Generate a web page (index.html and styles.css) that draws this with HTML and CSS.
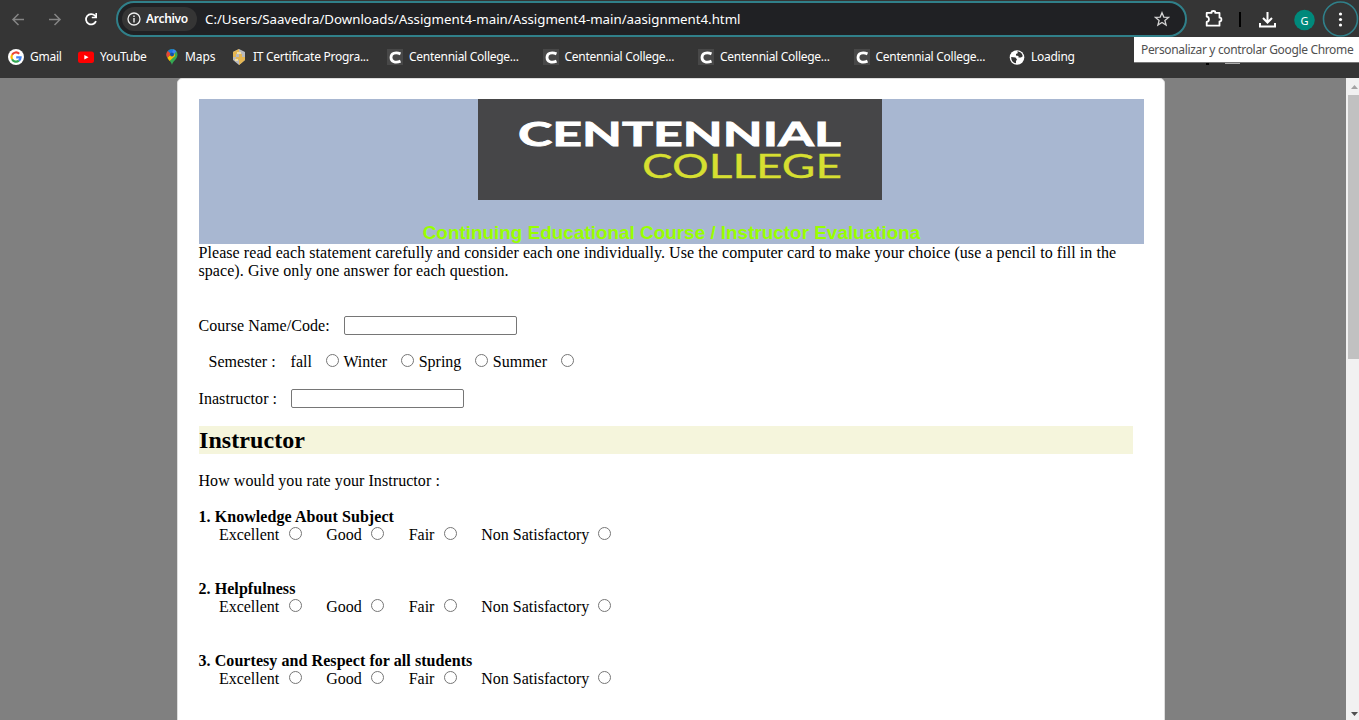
FILE: index.html
```html
<!DOCTYPE html>
<html lang="es">
<head>
<meta charset="utf-8">
<title>Course Evaluation</title>
<link rel="stylesheet" href="styles.css">
</head>
<body>
<header class="browser">
  <div class="toolbar">
    <svg class="nav-icons" width="116" height="38" viewBox="0 0 116 38" fill="none" stroke-width="1.5">
      <path stroke="#858585" d="M24 19.5H13M18.5 14l-5.5 5.5 5.5 5.5"/>
      <path stroke="#858585" d="M49 19.5h11M54.500 14l5.500 5.500-5.500 5.500"/>
      <path stroke="#fff" stroke-width="1.8" d="M96 21.200a5.200 5.200 0 1 1-1-5.500l1.300 1.400"/>
      <path fill="#fff" d="M97 13v5.200h-5.200v-1.500h3.600V13z"/>
    </svg>
    <div class="omnibox">
      <div class="chip">
        <svg width="14" height="14" viewBox="0 0 14 14"><circle cx="7" cy="7" r="6" fill="none" stroke="#eee" stroke-width="1.300"/><path fill="#eee" d="M6.300 6h1.400v4.500H6.300zM6.300 3.500h1.400v1.400H6.300z"/></svg>
        <span class="chip-label">Archivo</span>
      </div>
      <span class="url">C:/Users/Saavedra/Downloads/Assigment4-main/Assigment4-main/aasignment4.html</span>
      <svg class="star" width="16" height="16" viewBox="0 0 16 16" fill="none" stroke="#d4d4d4" stroke-width="1.300"><path d="M8 1.700l1.800 4.400 4.700.3-3.600 3 1.200 4.600L8 11.500 3.900 14l1.200-4.600-3.600-3 4.700-.3z"/></svg>
    </div>
    <svg class="tools" width="172" height="38" viewBox="0 0 172 38" fill="none">
      <path stroke="#fff" stroke-width="1.800" stroke-linejoin="round" d="M19.700 12.900h4.800v-.5a1.900 1.400 0 0 1 3.800 0v.5h4.200v4.800h.5a1.400 1.800 0 0 1 0 3.600h-.5v4.400H19.700v-3.700c3-.4 3-4.900 0-5.300z"/>
      <path stroke="#000" stroke-width="2" d="M53 12v15"/>
      <path stroke="#fff" stroke-width="2" d="M80.500 12v10M76 18l4.500 4.500L85 18M73 23v3.600h15V23"/>
      <circle cx="117.500" cy="20" r="10.300" fill="#00897b"/>
      <text class="avatar" x="117.500" y="24.500" text-anchor="middle">G</text>
      <circle cx="153.500" cy="19" r="17" stroke="#30808a" stroke-width="1.600"/>
      <g fill="#fff"><circle cx="153.500" cy="14" r="1.600"/><circle cx="153.500" cy="19.500" r="1.600"/><circle cx="153.500" cy="25" r="1.600"/></g>
    </svg>
  </div>
  <nav class="bookmarks">
    <a class="bm gmail"><svg width="16" height="16" viewBox="0 0 16 16" fill="none" stroke-width="2.200"><circle cx="8" cy="8" r="8" fill="#fff"/><path stroke="#ea4335" d="M4.100 5.800a4.500 4.500 0 0 1 7.100-1.100"/><path stroke="#fbbc05" d="M4.100 5.800a4.500 4.500 0 0 0 0 4.500"/><path stroke="#34a853" d="M4.100 10.300a4.500 4.500 0 0 0 6.800 1.400"/><path stroke="#4285f4" d="M10.900 11.700A4.500 4.500 0 0 0 12.600 8.300H8.200"/></svg><span>Gmail</span></a>
    <a class="bm youtube"><svg width="16" height="16" viewBox="0 0 16 16"><rect y="2.500" width="16" height="11.500" rx="2.500" fill="#f00"/><path fill="#fff" d="M6.300 6v4.600l4.200-2.300z"/></svg><span>YouTube</span></a>
    <a class="bm maps"><svg width="16" height="16" viewBox="0 0 16 16"><path fill="#34a853" d="M8 16c.5-3.600 5.500-6 5.500-10.300A5.500 5.500 0 0 0 2.500 5.500C2.500 9.500 7.500 12.500 8 16z"/><path fill="#fbbc04" d="M3.300 8.700L10 3l1 4-5.500 5z"/><path fill="#1a73e8" d="M3.800 2.100L8 5.500 11.500 1.500A5.500 5.500 0 0 0 3.800 2.100z"/><path fill="#ea4335" d="M3.800 2.100A5.500 5.500 0 0 0 3.300 8.700L7 5z"/><path fill="#4285f4" d="M9.700.3l2.800 2-4 4.300L7 5z"/><circle cx="8" cy="5.600" r="2" fill="#174ea6"/></svg><span>Maps</span></a>
    <a class="bm cert"><svg width="16" height="16" viewBox="0 0 16 16"><path fill="#b8b9bd" d="M2 3l3-1.500L8 0l3 1.500L14 3v8l-6 5-6-5z"/><path fill="#e4b653" d="M2 3l4-2 2-1v5H5v3H2zM8 5h3v3h3v3l-4 3.500L8 16v-5H5V8h3z"/><path fill="#f3dfa3" d="M6 3h4v2H6zM4 10h3v2H4z"/></svg><span>IT Certificate Progra...</span></a>
    <a class="bm cc"><svg width="16" height="16" viewBox="0 0 16 16"><path fill="#484848" d="M0 0h16v16H0z"/><path fill="none" stroke="#fff" stroke-width="2.800" d="M13.500 4.900C8.500 2.700 4 4.300 4 8.500s4.500 5.800 9.500 3.600"/></svg><span>Centennial College...</span></a>
    <a class="bm cc"><svg width="16" height="16" viewBox="0 0 16 16"><path fill="#484848" d="M0 0h16v16H0z"/><path fill="none" stroke="#fff" stroke-width="2.800" d="M13.500 4.900C8.500 2.700 4 4.300 4 8.500s4.500 5.800 9.500 3.600"/></svg><span>Centennial College...</span></a>
    <a class="bm cc"><svg width="16" height="16" viewBox="0 0 16 16"><path fill="#484848" d="M0 0h16v16H0z"/><path fill="none" stroke="#fff" stroke-width="2.800" d="M13.500 4.900C8.500 2.700 4 4.300 4 8.500s4.500 5.800 9.500 3.600"/></svg><span>Centennial College...</span></a>
    <a class="bm cc"><svg width="16" height="16" viewBox="0 0 16 16"><path fill="#484848" d="M0 0h16v16H0z"/><path fill="none" stroke="#fff" stroke-width="2.800" d="M13.500 4.900C8.500 2.700 4 4.300 4 8.500s4.500 5.800 9.500 3.600"/></svg><span>Centennial College...</span></a>
    <a class="bm loading"><svg width="16" height="16" viewBox="0 0 16 16"><circle cx="8" cy="8.500" r="7.300" fill="#fff"/><path fill="#353535" d="M8 2.500c3-.3 5.500 2 5.700 4.700L12 8.500H9.500V7L7 6.500V5l2-1zM2.200 8l4.300.5 1.500 2-1 1.500v2.300C4 13.800 2 11.300 2.200 8z"/></svg><span>Loading</span></a>
  </nav>
  <div class="tooltip">Personalizar y controlar Google Chrome</div>
  <i class="sliver dark"></i><i class="sliver light"></i>
</header>
<div class="viewport">
  <main class="sheet">
    <div class="banner">
      <svg class="logo" width="404" height="101" viewBox="0 0 404 101">
        <path fill="#464648" d="M0 0h404v101H0z"/>
        <text class="logo-top" x="40" y="47" textLength="323" lengthAdjust="spacingAndGlyphs">CENTENNIAL</text>
        <text class="logo-bottom" x="164" y="79" textLength="200" lengthAdjust="spacingAndGlyphs">COLLEGE</text>
      </svg>
      <h1 class="title">Continuing Educational Course / Instructor Evaluationa</h1>
    </div>
    <p class="intro">Please read each statement carefully and consider each one individually. Use the computer card to make your choice (use a pencil to fill in the space). Give only one answer for each question.</p>
    <form class="form">
      <div class="row course"><label>Course Name/Code:</label><input type="text" class="field"></div>
      <div class="row semester"><span class="sem-label">Semester :</span><label>fall<input type="radio"></label><label>Winter<input type="radio"></label><label>Spring<input type="radio"></label><label>Summer<input type="radio"></label></div>
      <div class="row teacher"><label>Inastructor :</label><input type="text" class="field"></div>
      <h2 class="section">Instructor</h2>
      <p class="ask">How would you rate your Instructor :</p>
      <div class="question"><b>1. Knowledge About Subject</b><div class="options"><label>Excellent<input type="radio"></label><label>Good<input type="radio"></label><label>Fair<input type="radio"></label><label>Non Satisfactory<input type="radio"></label></div></div>
      <div class="question"><b>2. Helpfulness</b><div class="options"><label>Excellent<input type="radio"></label><label>Good<input type="radio"></label><label>Fair<input type="radio"></label><label>Non Satisfactory<input type="radio"></label></div></div>
      <div class="question"><b>3. Courtesy and Respect for all students</b><div class="options"><label>Excellent<input type="radio"></label><label>Good<input type="radio"></label><label>Fair<input type="radio"></label><label>Non Satisfactory<input type="radio"></label></div></div>
    </form>
  </main>
  <aside class="scrollbar">
    <svg width="13" height="17" viewBox="0 0 13 17"><path fill="#a3a3a3" d="M5 11l3.500-4L12 11z"/></svg>
    <div class="thumb"></div>
    <svg class="down" width="13" height="17" viewBox="0 0 13 17"><path fill="#505050" d="M5 9h7l-3.500 4z"/></svg>
  </aside>
</div>
</body>
</html>
```
FILE: styles.css
```css
* { box-sizing: border-box; }
body { margin: 0; width: 1359px; height: 720px; overflow: hidden; display: flex; flex-direction: column; background: #808080; font: 16px/18px "Liberation Serif", "Times New Roman", serif; color: #000; }
svg { display: block; flex: none; }
.browser { position: relative; flex: none; height: 78px; background: #353535; color: #fff; font-family: "Noto Sans", "Open Sans", sans-serif; }
.toolbar { display: flex; height: 38px; }
.omnibox { display: flex; align-items: center; width: 1072px; margin-right: -1px; height: 36px; margin-top: 1px; padding: 0 15px 0 4px; border: 2px solid #30808a; border-radius: 18px; background: #202124; }
.chip { display: flex; align-items: center; gap: 5px; width: 75px; height: 24px; padding-left: 5px; border-radius: 12px; background: #353535; white-space: nowrap; }
.chip-label { font-size: 12px; font-weight: 600; letter-spacing: -0.3px; }
.url { margin-left: 8px; font-size: 13.3px; letter-spacing: -0.015px; white-space: nowrap; }
.star { margin-left: auto; }
.tools { margin-left: 1px; }
.avatar { font: 11px "Noto Sans", sans-serif; fill: #fff; }
.bookmarks { display: flex; height: 40px; padding-left: 8px; }
.bm { display: flex; align-items: center; gap: 6px; height: 38px; font-size: 12px; letter-spacing: -0.27px; white-space: nowrap; }
.gmail { width: 70px; }
.youtube { width: 86px; }
.maps { width: 67px; gap: 5px; letter-spacing: -0.1px; }
.cert { width: 156px; }
.cc { width: 155.500px; }
.tooltip { position: absolute; left: 1134px; top: 37px; width: 225px; height: 26px; padding-left: 7px; background: #fff; border-bottom: 1px solid #777; color: #505050; font-size: 12px; line-height: 25px; letter-spacing: -0.34px; white-space: nowrap; }
.sliver { position: absolute; height: 1px; top: 63px; }
.dark { left: 1206px; width: 3px; height: 2px; background: #000; }
.light { left: 1225px; width: 15px; background: #aaa; }
.viewport { flex: 1; display: flex; justify-content: space-between; min-height: 0; }
.sheet { width: 988px; height: 650px; margin-left: 177px; padding: 20px 20px 0; border: 1px solid #ddd; border-radius: 5px; background: #fff; letter-spacing: 0.065px; }
.banner { width: 945px; height: 145px; margin-left: 1px; background: #a8b7d1; }
.logo { margin-left: 279px; letter-spacing: 0; }
.logo-top { font: bold 33px Lato, sans-serif; fill: #fff; stroke: #fff; stroke-width: 0.8px; }
.logo-bottom { font: 33px Lato, sans-serif; fill: #d6df31; stroke: #d6df31; stroke-width: 0.3px; }
.title { margin: 21px 0 0; font: bold 19px/23px "Liberation Sans", Arial, sans-serif; letter-spacing: -0.05px; color: #9f0; text-align: center; white-space: nowrap; }
.intro { width: 945px; height: 36px; margin: 0; padding-left: 0.5px; }
.form { padding-left: 0.5px; }
.row { display: flex; align-items: center; height: 19px; }
.field { width: 173px; height: 19px; padding: 0; border: 1px solid #767676; border-radius: 2px; background: #fff; }
.course { margin-top: 36px; }
.course .field { margin-left: 14px; }
.semester { height: 18px; margin: 18px 0; padding-left: 10px; letter-spacing: 0; }
.sem-label { margin-right: 15px; }
.row label, .options label { display: flex; align-items: center; }
input[type="radio"] { width: 13px; height: 13px; margin: 0 4.7px 4px 13.8px; }
.teacher .field { margin-left: 14px; }
.section { width: 934px; height: 28px; margin: 18px 0 0 0.5px; background: #f5f5dc; font-size: 24px; line-height: 28px; }
.ask { margin: 18px 0; }
.question { height: 72px; }
.options { display: flex; gap: 24.7px; padding-left: 20.4px; letter-spacing: 0; }
.options input[type="radio"] { margin: 0 0 4px 9.2px; }
.scrollbar { width: 13px; background: #f1f1f1; display: flex; flex-direction: column; }
.thumb { height: 264px; margin-left: 2px; background: #c1c1c1; }
.down { margin-top: auto; }
```
